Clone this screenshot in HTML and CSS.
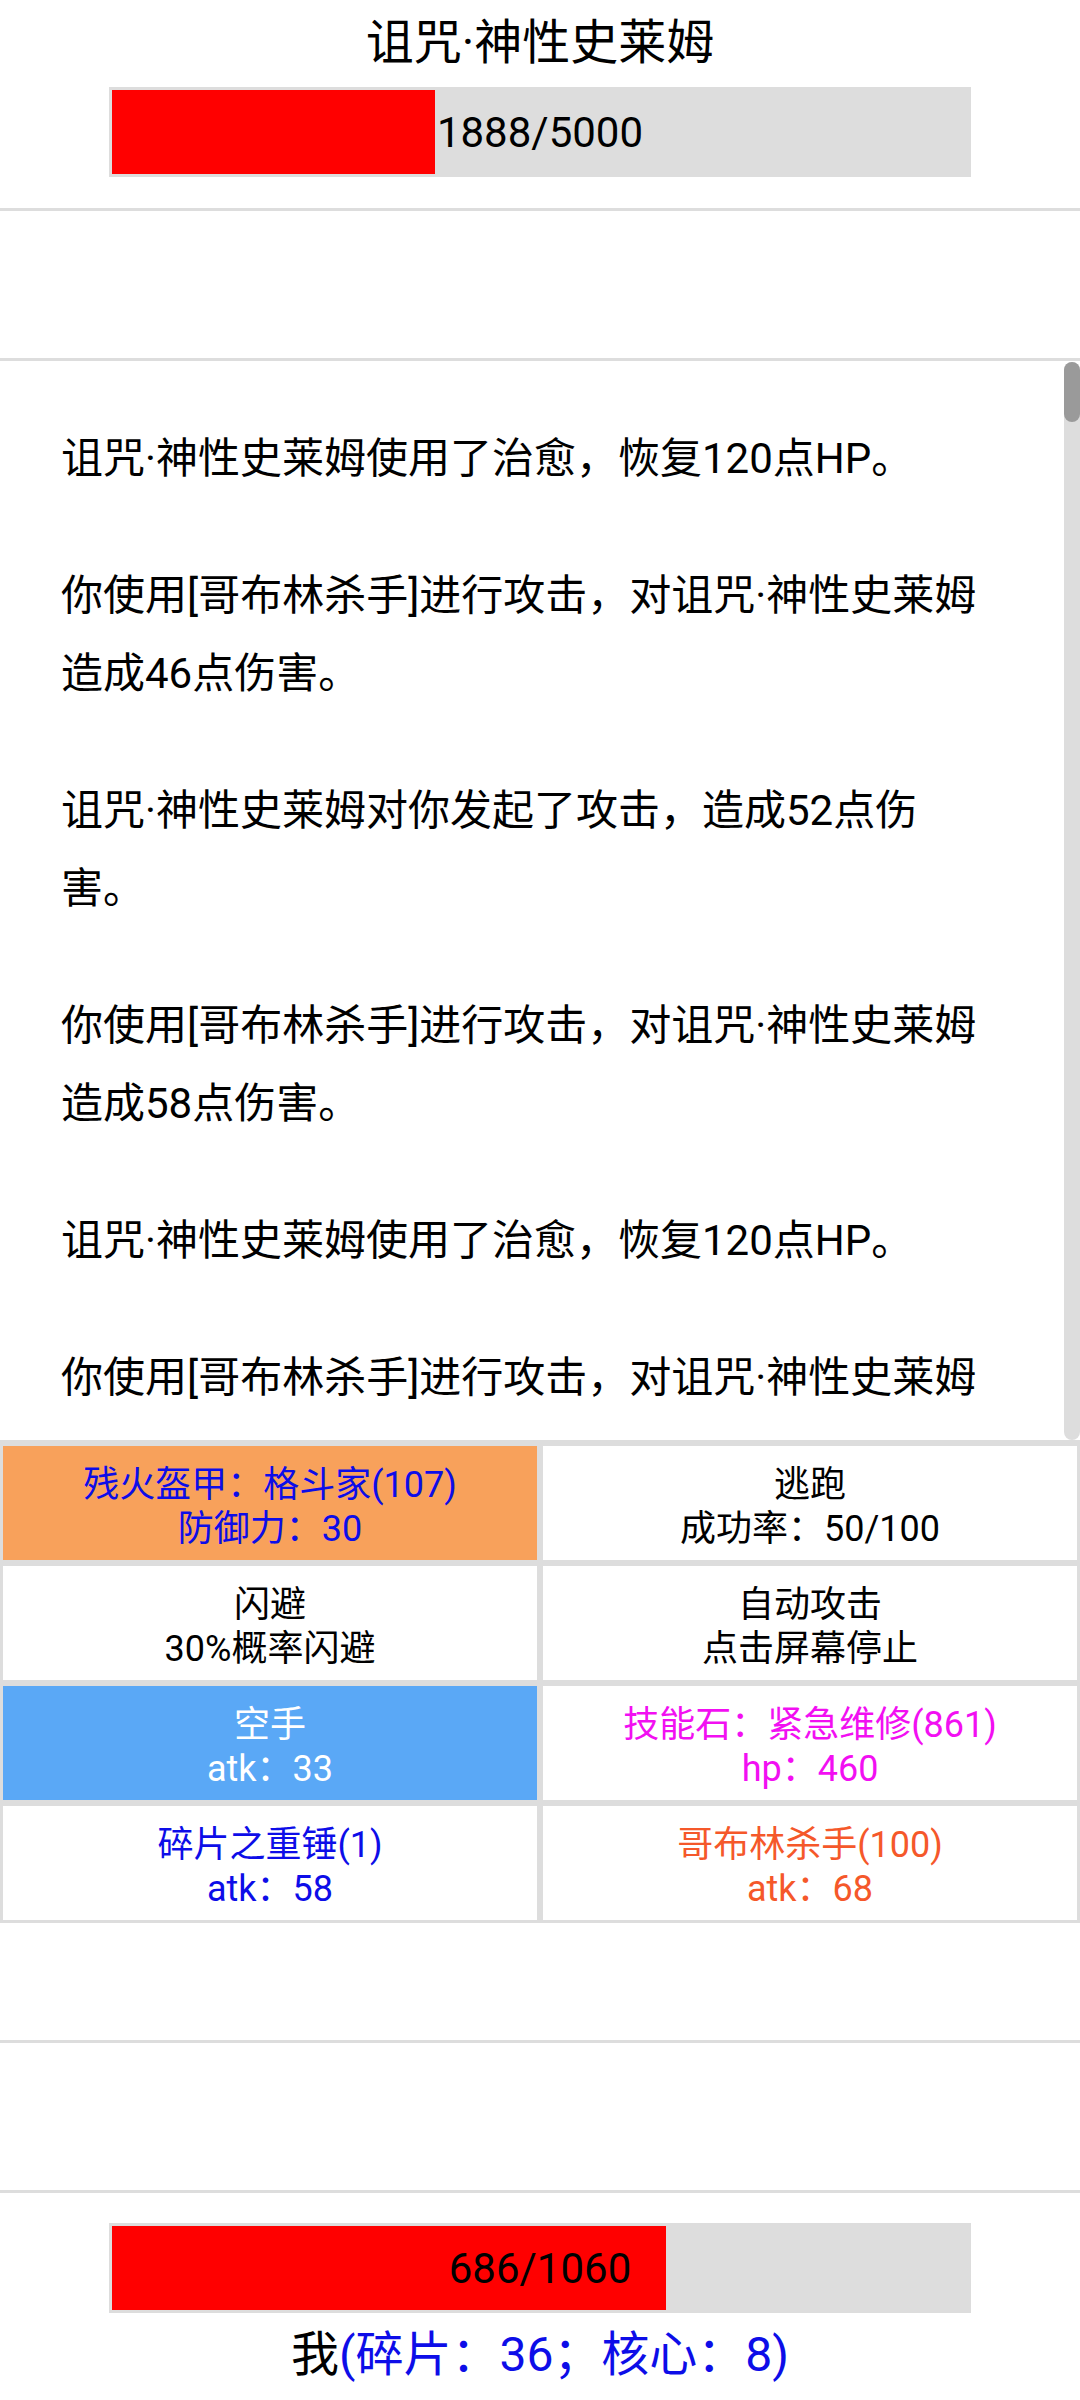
FILE: index.html
```html
<!DOCTYPE html>
<html lang="zh-CN">
<head>
    <meta charset="UTF-8">
    <meta name="viewport" content="width=device-width, initial-scale=1.0">
    <title>战斗</title>
    <link rel="stylesheet" href="styles.css">
</head>
<body>
    <div class="enemy">
        <div class="enemy-name">诅咒·神性史莱姆</div>
        <div class="hp-bar">
            <div class="hp-fill" style="width: 37.76%;"></div>
            <span class="hp-text">1888/5000</span>
        </div>
    </div>

    <div class="spacer"></div>

    <div class="log">
        <div class="log-list">
            <p>诅咒·神性史莱姆使用了治愈，恢复120点HP。</p>
            <p>你使用[哥布林杀手]进行攻击，对诅咒·神性史莱姆造成46点伤害。</p>
            <p>诅咒·神性史莱姆对你发起了攻击，造成52点伤害。</p>
            <p>你使用[哥布林杀手]进行攻击，对诅咒·神性史莱姆造成58点伤害。</p>
            <p>诅咒·神性史莱姆使用了治愈，恢复120点HP。</p>
            <p>你使用[哥布林杀手]进行攻击，对诅咒·神性史莱姆</p>
        </div>
        <div class="scroll-track"><div class="scroll-thumb"></div></div>
    </div>

    <div class="actions">
        <div class="action armor">
            <span>残火盔甲：格斗家(107)</span>
            <span>防御力：30</span>
        </div>
        <div class="action">
            <span>逃跑</span>
            <span>成功率：50/100</span>
        </div>
        <div class="action">
            <span>闪避</span>
            <span>30%概率闪避</span>
        </div>
        <div class="action">
            <span>自动攻击</span>
            <span>点击屏幕停止</span>
        </div>
        <div class="action selected">
            <span>空手</span>
            <span>atk：33</span>
        </div>
        <div class="action skill">
            <span>技能石：紧急维修(861)</span>
            <span>hp：460</span>
        </div>
        <div class="action shard">
            <span>碎片之重锤(1)</span>
            <span>atk：58</span>
        </div>
        <div class="action rare">
            <span>哥布林杀手(100)</span>
            <span>atk：68</span>
        </div>
    </div>

    <div class="spacer short"></div>
    <div class="spacer"></div>

    <div class="player">
        <div class="hp-bar">
            <div class="hp-fill" style="width: 64.72%;"></div>
            <span class="hp-text">686/1060</span>
        </div>
        <div class="player-name">我<span class="loot">(碎片：36；核心：8)</span></div>
    </div>
</body>
</html>
```

FILE: styles.css
```css
body {
    margin: 0;
    width: 1080px;
    height: 2400px;
    overflow: hidden;
    background: #fff;
    color: #000;
    font-family: Roboto, "Noto Sans CJK SC", sans-serif;
}
.enemy {
    padding: 13px 0 31px;
    border-bottom: 3px solid #ddd;
}
.enemy-name {
    font-size: 48px;
    line-height: 60px;
    text-align: center;
    margin-bottom: 14px;
}
.hp-bar {
    position: relative;
    width: 856px;
    height: 84px;
    padding: 3px;
    margin: 0 auto;
    background: #ddd;
}
.hp-fill {
    height: 100%;
    background: #ff0000;
}
.hp-text {
    position: absolute;
    inset: 0;
    display: flex;
    align-items: center;
    justify-content: center;
    font-size: 42px;
}
.spacer {
    height: 147px;
    border-bottom: 3px solid #ddd;
}
.spacer.short {
    height: 117px;
}
.log {
    position: relative;
    height: 1079px;
    overflow: hidden;
    border-bottom: 3px solid #ddd;
}
.log-list {
    width: 930px;
    padding: 59px 0 0 61px;
    font-size: 42px;
    line-height: 78px;
}
.log-list p {
    margin: 0 0 59px;
}
.scroll-track {
    position: absolute;
    top: 1px;
    right: 0;
    bottom: 0;
    width: 16px;
    border-radius: 8px;
    background: #ddd;
}
.scroll-thumb {
    height: 60px;
    border-radius: 8px;
    background: #9a9a9a;
}
.actions {
    display: grid;
    grid-template-columns: 1fr 1fr;
    grid-auto-rows: 114px;
    gap: 6px;
    padding: 3px;
    background: #ddd;
}
.action {
    display: flex;
    flex-direction: column;
    align-items: center;
    justify-content: center;
    padding-top: 7px;
    box-sizing: border-box;
    background: #fff;
    font-size: 36px;
    line-height: 44px;
}
.action.armor {
    background: #f8a15b;
    color: #0d0de8;
}
.action.selected {
    background: #5aa8f6;
    color: #fff;
}
.action.skill {
    color: #f20ff2;
}
.action.shard {
    color: #0d0de8;
}
.action.rare {
    color: #f5582a;
}
.player {
    padding-top: 30px;
}
.player-name {
    margin-top: 12px;
    font-size: 48px;
    line-height: 60px;
    text-align: center;
}
.loot {
    color: #0d0de8;
}
```
